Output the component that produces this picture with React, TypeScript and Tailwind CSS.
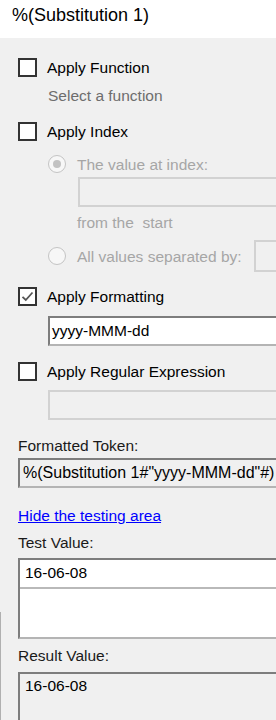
import React from 'react';

const Checkbox: React.FC<{ checked?: boolean }> = ({ checked }) => (
    <div className="w-[19px] h-[19px] shrink-0 border-2 border-[#333333] bg-white flex items-center justify-center">
        {checked && (
            <svg width="13" height="13" viewBox="0 0 13 13">
                <path d="M1.5 6.8 L4.8 10 L11.5 2.5" fill="none" stroke="#555555" strokeWidth="1.8" />
            </svg>
        )}
    </div>
);

const Radio: React.FC<{ checked?: boolean }> = ({ checked }) => (
    <div className="w-[18px] h-[18px] shrink-0 rounded-full border-[1.5px] border-[#c4c4c4] bg-[#f7f7f7] flex items-center justify-center">
        {checked && <div className="w-[8px] h-[8px] rounded-full bg-[#c2c2c2]" />}
    </div>
);

const CheckRow: React.FC<{ label: string; checked?: boolean; className?: string }> = ({ label, checked, className }) => (
    <div className={`flex items-center h-[19px] ${className ?? ''}`}>
        <Checkbox checked={checked} />
        <span className="ml-[10px] leading-[19px] text-black">{label}</span>
    </div>
);

const sunken = 'border-2 border-t-[#7d7d7d] border-l-[#7d7d7d] border-b-[#b4b4b4] border-r-[#b4b4b4]';
const disabledBox = 'border-2 border-[#d2d2d2] bg-[#f0f0f0]';

export default function App() {
    return (
        <div className="w-[276px] h-[720px] relative overflow-hidden bg-[#f0f0f0] font-['Liberation_Sans',Arial,sans-serif] text-[15.5px]">
            {/* title bar */}
            <div className="h-[38px] bg-white pl-[12px] pt-[4px] text-[18px] leading-[22px] text-black">
                %(Substitution 1)
            </div>

            <div className="pl-[18px] pt-[20px]">
                <CheckRow label="Apply Function" />
                <div className="mt-[9px] ml-[30px] leading-[19px] text-[#6d6d6d]">Select a function</div>

                <CheckRow label="Apply Index" className="mt-[17px]" />
                <div className="mt-[14px] ml-[30px] flex items-center h-[18px]">
                    <Radio checked />
                    <span className="ml-[11px] leading-[19px] text-[#a6a6a6]">The value at index:</span>
                </div>
                <div className={`mt-[4px] ml-[60px] w-[240px] h-[30px] ${disabledBox}`} />
                <div className="mt-[6px] ml-[59px] leading-[19px] text-[#a6a6a6] whitespace-pre">from the  start</div>
                <div className="mt-[8px] ml-[30px] flex items-center h-[32px]">
                    <Radio />
                    <span className="ml-[11px] w-[177px] shrink-0 leading-[19px] text-[#a6a6a6] whitespace-nowrap">All values separated by:</span>
                    <div className={`w-[40px] h-[32px] shrink-0 ${disabledBox}`} />
                </div>

                <CheckRow label="Apply Formatting" checked className="mt-[15px]" />
                <div className={`mt-[10px] ml-[30px] w-[240px] h-[30px] bg-white ${sunken} pl-[2px] leading-[26px] text-black`}>
                    yyyy-MMM-dd
                </div>

                <CheckRow label="Apply Regular Expression" className="mt-[16px]" />
                <div className={`mt-[9px] ml-[30px] w-[240px] h-[30px] ${disabledBox}`} />

                <div className="mt-[16px] leading-[19px] text-[#1a1a1a]">Formatted Token:</div>
                <div className={`mt-[3px] w-[280px] h-[30px] ${sunken} pl-[3px] text-[16px] leading-[26px] text-black whitespace-nowrap`}>
                    %(Substitution 1#"yyyy-MMM-dd"#)
                </div>

                <a href="#" className="block mt-[18px] leading-[19px] text-[#0000ff] underline w-fit">
                    Hide the testing area
                </a>

                <div className="mt-[8px] leading-[19px] text-[#1a1a1a]">Test Value:</div>
                <div className={`mt-[6px] w-[280px] h-[81px] bg-white ${sunken} flex flex-col`}>
                    <div className="h-[27px] pl-[5px] pt-[3px] leading-[19px] text-black">16-06-08</div>
                    <div className="h-[2px] bg-[#b9b9b9]" />
                </div>

                <div className="mt-[7px] leading-[19px] text-[#1a1a1a]">Result Value:</div>
                <div className={`mt-[7px] w-[280px] h-[80px] ${sunken} pl-[5px] pt-[2px] leading-[19px] text-black`}>
                    16-06-08
                </div>
            </div>

            {/* splitter edge */}
            <div className="absolute left-0 top-[612px] bottom-0 w-px bg-[#b0b0b0]" />
        </div>
    );
}
